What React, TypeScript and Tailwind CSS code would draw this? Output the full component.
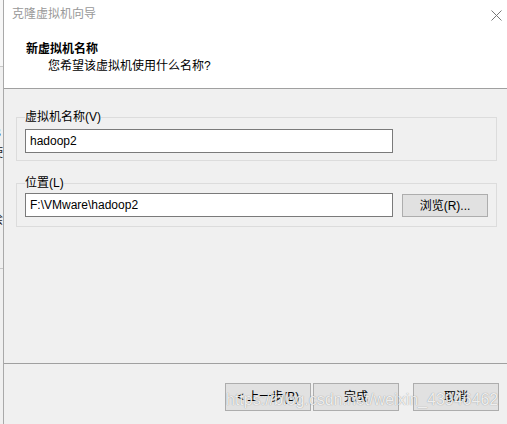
const FONT = "font-['Liberation_Sans','Noto_Sans_CJK_SC',sans-serif]";

function WinButton({ label, className = "" }: { label: string; className?: string }) {
  return (
    <button
      className={`flex h-[28px] w-[86px] items-center justify-center border border-[#adadad] bg-[#e1e1e1] text-[12px] leading-4 text-black ${className}`}
    >
      {label}
    </button>
  );
}

function TextBox({ value }: { value: string }) {
  return (
    <div className="flex h-[24px] w-[368px] items-center border border-[#7a7a7a] bg-white pl-[4px] text-[12px] leading-4 text-black">
      {value}
    </div>
  );
}

export default function App() {
  return (
    <div className={`flex h-[424px] w-[507px] overflow-hidden bg-[#f0f0f0] ${FONT}`}>
      {/* sliver of the window behind */}
      <div className="flex w-[3px] flex-col overflow-hidden">
        <div className="h-[67px] border-b border-[#c8c8c8] bg-[#f7f7f7]" />
        <div className="-ml-[7px] mt-[58px] text-[12px] leading-4 text-[#222]">B</div>
        <div className="-ml-[9px] mt-[4px] text-[12px] leading-4 text-[#222]">使</div>
        <div className="-ml-[9px] mt-[51px] text-[12px] leading-4 text-[#222]">绘</div>
        <div className="mt-[40px] h-px w-full bg-[#c8c8c8]" />
      </div>
      <div className="w-px bg-[#a9a9a9]" />

      <div className="flex flex-1 flex-col">
        <div className="h-[89px] border-b border-[#a0a0a0] bg-white">
          <div className="flex items-center justify-between pl-[8px] pr-[5px] pt-[6px]">
            <span className="text-[12px] leading-4 text-[#999]">克隆虚拟机向导</span>
            <svg width="11" height="11" viewBox="0 0 11 11" className="mt-[2px]">
              <path d="M0.5 0.5L10.5 10.5M10.5 0.5L0.5 10.5" stroke="#777" strokeWidth="1" />
            </svg>
          </div>
          <div className="mt-[19px] pl-[22px] text-[12px] font-bold leading-4 text-black">新虚拟机名称</div>
          <div className="mt-px pl-[44px] text-[12px] leading-4 text-black">您希望该虚拟机使用什么名称?</div>
        </div>

        <div className="flex flex-1 flex-col pl-[12px] pr-[10px]">
          <fieldset className="mt-[20px] border border-[#dcdcdc] pb-[7px] pl-[8px] pt-[4px]">
            <legend className="text-[12px] leading-4 text-black">虚拟机名称(V)</legend>
            <TextBox value="hadoop2" />
          </fieldset>

          <fieldset className="mt-[14px] border border-[#dcdcdc] pb-[9px] pl-[8px] pt-[2px]">
            <legend className="text-[12px] leading-4 text-black">位置(L)</legend>
            <div className="flex items-center gap-[9px]">
              <TextBox value="F:\VMware\hadoop2" />
              <button className="mt-[1px] flex h-[23px] w-[86px] items-center justify-center border border-[#adadad] bg-[#e1e1e1] text-[12px] leading-4 text-black">
                浏览(R)...
              </button>
            </div>
          </fieldset>
        </div>

        <div className="relative h-[61px] border-t border-[#a0a0a0]">
          <div className="flex pl-[221px] pt-[19px]">
            <WinButton label="< 上一步(B)" />
            <WinButton label="完成" className="ml-[2px]" />
            <WinButton label="取消" className="ml-[14px]" />
          </div>
          <div className="pointer-events-none absolute left-[222px] top-[26px] font-['Liberation_Sans',sans-serif] text-[16px] leading-5 text-white/85 [text-shadow:0_0_1px_rgba(0,0,0,0.45)]">
            https://blog.csdn.net/weixin_43946462
          </div>
        </div>
      </div>
    </div>
  );
}
